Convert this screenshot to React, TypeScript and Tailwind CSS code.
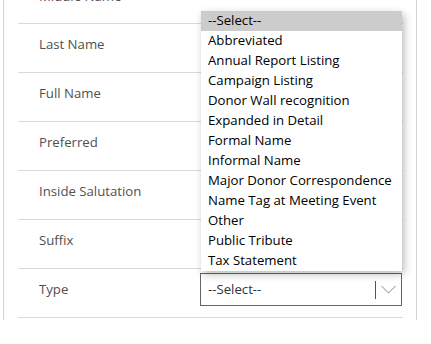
const labels = [
  'Middle Name',
  'Last Name',
  'Full Name',
  'Preferred',
  'Inside Salutation',
  'Suffix',
  'Type',
];

const options = [
  '--Select--',
  'Abbreviated',
  'Annual Report Listing',
  'Campaign Listing',
  'Donor Wall recognition',
  'Expanded in Detail',
  'Formal Name',
  'Informal Name',
  'Major Donor Correspondence',
  'Name Tag at Meeting Event',
  'Other',
  'Public Tribute',
  'Tax Statement',
];

export default function App() {
  return (
    <div
      className="relative h-[344px] w-[431px] overflow-hidden bg-white text-[13.2px]"
      style={{ fontFamily: '"Open Sans", sans-serif' }}
    >
      <div className="ml-[3px] h-full w-[414px] border-x border-[#d4d4d4] pl-[14px] pr-[13px]">
        <div className="-mt-[24px]">
          {labels.map((label, i) => (
            <div
              key={label}
              className={`border-b border-[#d9d9d9] pt-[4px] ${i === 0 ? 'pb-[10px]' : 'pb-[11px]'}`}
            >
              <div className="flex h-[33px] items-center">
                <span className="w-[182px] pl-[21px] text-[#505050]">{label}</span>
                {label === 'Type' && (
                  <div className="flex h-[33px] w-[202px] items-center border border-[#666] pl-[7px] text-[#333]">
                    <span className="flex-1">--Select--</span>
                    <span className="h-[18px] w-px bg-[#555]" />
                    <svg className="mx-[5px]" width="15" height="9" viewBox="0 0 15 9" fill="none">
                      <polyline points="0.5,1 7.5,8 14.5,1" stroke="#888" strokeWidth="1" />
                    </svg>
                  </div>
                )}
              </div>
            </div>
          ))}
        </div>
      </div>

      {/* open dropdown list */}
      <ul className="absolute left-[201px] top-[11px] w-[201px] bg-white shadow-[2px_3px_8px_rgba(0,0,0,0.28)]">
        {options.map((opt, i) => (
          <li
            key={opt}
            className={`flex h-[20px] items-center whitespace-nowrap pb-[1px] pl-[7px] text-black ${i === 0 ? 'bg-[#cccccc]' : ''}`}
          >
            {opt}
          </li>
        ))}
      </ul>
    </div>
  );
}
